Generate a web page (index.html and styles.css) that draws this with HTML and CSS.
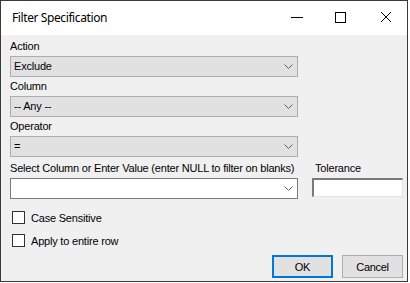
FILE: index.html
```html
<!DOCTYPE html>
<html lang="en">
<head>
    <meta charset="UTF-8">
    <title>Filter Specification</title>
    <link rel="stylesheet" href="styles.css">
</head>
<body>

<div class="window">
    <div class="titlebar">
        <span class="title">Filter Specification</span>
        <div class="controls">
            <span class="ctl min">
                <svg width="12" height="12" viewBox="0 0 12 12"><path d="M0 6.5H12" stroke="#000" stroke-width="1"/></svg>
            </span>
            <span class="ctl max">
                <svg width="12" height="12" viewBox="0 0 12 12"><rect x="1.5" y="1.5" width="10" height="10" fill="none" stroke="#000" stroke-width="1"/></svg>
            </span>
            <span class="ctl close">
                <svg width="12" height="12" viewBox="0 0 12 12"><path d="M1 1L11 11M11 1L1 11" stroke="#000" stroke-width="1"/></svg>
            </span>
        </div>
    </div>

    <div class="content">
        <div class="label">Action</div>
        <div class="combo">
            <span>Exclude</span>
            <svg class="chev" width="9" height="5" viewBox="0 0 9 5"><path d="M0.5 0.5L4.5 4.5L8.5 0.5" fill="none" stroke="#606060" stroke-width="1"/></svg>
        </div>

        <div class="label spaced">Column</div>
        <div class="combo">
            <span>-- Any --</span>
            <svg class="chev" width="9" height="5" viewBox="0 0 9 5"><path d="M0.5 0.5L4.5 4.5L8.5 0.5" fill="none" stroke="#606060" stroke-width="1"/></svg>
        </div>

        <div class="label spaced">Operator</div>
        <div class="combo">
            <span>=</span>
            <svg class="chev" width="9" height="5" viewBox="0 0 9 5"><path d="M0.5 0.5L4.5 4.5L8.5 0.5" fill="none" stroke="#606060" stroke-width="1"/></svg>
        </div>

        <div class="value-row">
            <div class="value-col">
                <div class="label">Select Column or Enter Value (enter NULL to filter on blanks)</div>
                <div class="combo edit">
                    <span></span>
                    <svg class="chev" width="9" height="5" viewBox="0 0 9 5"><path d="M0.5 0.5L4.5 4.5L8.5 0.5" fill="none" stroke="#606060" stroke-width="1"/></svg>
                </div>
            </div>
            <div class="tol-col">
                <div class="label">Tolerance</div>
                <div class="textbox"></div>
            </div>
        </div>

        <label class="check first"><span class="box"></span>Case Sensitive</label>
        <label class="check"><span class="box"></span>Apply to entire row</label>

        <div class="buttons">
            <button class="btn default">OK</button>
            <button class="btn">Cancel</button>
        </div>
    </div>
</div>

</body>
</html>
```

FILE: styles.css
```css
body {
    margin: 0;
    padding: 0;
    background-color: #fff;
    font-family: "Liberation Sans", Arial, sans-serif;
    font-size: 11px;
    letter-spacing: -0.2px;
    color: #000;
}
.window {
    width: 406px;
    height: 280px;
    border: 1px solid #3a3a3a;
    background-color: #f0f0f0;
    display: flex;
    flex-direction: column;
}
.titlebar {
    height: 34px;
    background-color: #fff;
    display: flex;
    align-items: center;
    justify-content: space-between;
}
.title {
    font-family: "Noto Sans", sans-serif;
    font-size: 12px;
    letter-spacing: -0.4px;
    margin-left: 11px;
    margin-top: -1px;
}
.controls {
    display: flex;
    margin-right: 15px;
    margin-top: -2px;
}
.ctl {
    width: 12px;
    height: 12px;
    display: flex;
}
.ctl.max {
    margin-left: 31px;
}
.ctl.close {
    margin-left: 34px;
}
.content {
    padding: 5px 4px 0 9px;
}
.label {
    line-height: 13px;
    height: 13px;
    margin-bottom: 3px;
    white-space: nowrap;
}
.label.spaced {
    margin-top: 3px;
}
.combo {
    width: 283px;
    height: 19px;
    border: 1px solid #adadad;
    background-color: #e1e1e1;
    display: flex;
    align-items: center;
    justify-content: space-between;
    padding-left: 3px;
}
.combo span {
    line-height: 13px;
}
.chev {
    margin-right: 4px;
}
.combo.edit {
    background-color: #fff;
    border-color: #7a7a7a;
}
.value-row {
    display: flex;
    margin-top: 5px;
}
.value-col {
    width: 288px;
}
.tol-col {
    margin-left: 14px;
}
.tol-col .label {
    padding-left: 3px;
}
.textbox {
    width: 88px;
    height: 16px;
    background-color: #fff;
    border-top: 2px solid #7a7a7a;
    border-left: 2px solid #7a7a7a;
    border-right: 1px solid #e3e3e3;
    border-bottom: 1px solid #e3e3e3;
}
.check {
    display: flex;
    align-items: center;
    height: 13px;
    margin-top: 10px;
    margin-left: 2px;
}
.check.first {
    margin-top: 12px;
}
.box {
    width: 11px;
    height: 11px;
    border: 1px solid #333;
    background-color: #fff;
    margin-right: 6px;
}
.buttons {
    display: flex;
    justify-content: flex-end;
    gap: 9px;
    margin-top: 8px;
}
.btn {
    width: 61px;
    height: 23px;
    border: 1px solid #adadad;
    background-color: #e1e1e1;
    font-family: "Liberation Sans", Arial, sans-serif;
    font-size: 11px;
    letter-spacing: -0.3px;
    padding: 0;
    color: #000;
}
.btn.default {
    border: 2px solid #0078d7;
}
```
